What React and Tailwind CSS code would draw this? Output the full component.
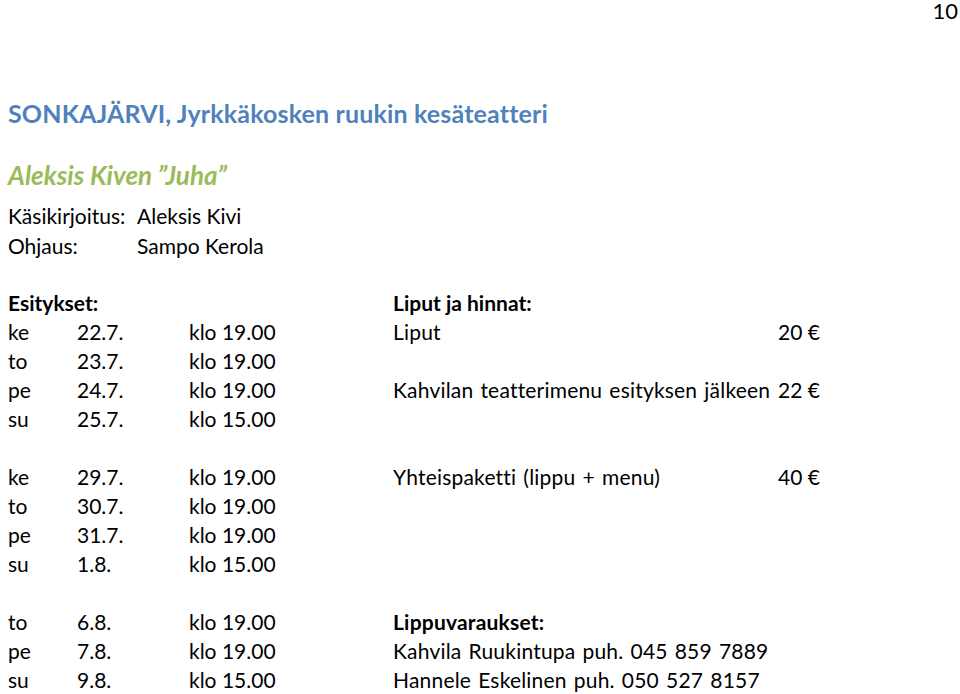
const shows = [
  [
    ["ke", "22.7.", "klo 19.00"],
    ["to", "23.7.", "klo 19.00"],
    ["pe", "24.7.", "klo 19.00"],
    ["su", "25.7.", "klo 15.00"],
  ],
  [
    ["ke", "29.7.", "klo 19.00"],
    ["to", "30.7.", "klo 19.00"],
    ["pe", "31.7.", "klo 19.00"],
    ["su", "1.8.", "klo 15.00"],
  ],
  [
    ["to", "6.8.", "klo 19.00"],
    ["pe", "7.8.", "klo 19.00"],
    ["su", "9.8.", "klo 15.00"],
  ],
];

// right column text, lined up with the show rows
const right = [
  [
    { label: "Liput", price: "20 €" },
    null,
    { label: "Kahvilan teatterimenu esityksen jälkeen", price: "22 €" },
    null,
  ],
  [{ label: "Yhteispaketti (lippu + menu)", price: "40 €" }, null, null, null],
  [
    { label: "Kahvila Ruukintupa puh. 045 859 7889" },
    { label: "Hannele Eskelinen puh. 050 527 8157" },
  ],
];

const Row = ({ show, info, bold }) => (
  <div className="flex h-[29px] items-center">
    <div className="w-[69px]">{show?.[0]}</div>
    <div className="w-[112px]">{show?.[1]}</div>
    <div className="w-[204px]">{show?.[2]}</div>
    {info && (
      <div className={`flex w-[427px] justify-between whitespace-nowrap ${bold ? "font-bold" : ""}`}>
        <span className="tracking-[0.2px] [word-spacing:1.5px]">{info.label}</span>
        {info.price && <span>{info.price}</span>}
      </div>
    )}
  </div>
);

export default function App() {
  return (
    <div className="relative h-[694px] w-[960px] overflow-hidden bg-white font-['Lato',sans-serif] text-[21px] text-black">
      <div className="h-[20px] pt-[1px] pr-[2px] text-right text-[22px] leading-[19px]">10</div>

      <div className="pl-[8px]">
        <h1 className="mt-[78px] h-[30px] text-[25px] leading-[30px] font-bold tracking-[0.15px] text-[#4f81bd]">
          SONKAJÄRVI, Jyrkkäkosken ruukin kesäteatteri
        </h1>
        <h2 className="mt-[32px] h-[30px] text-[26px] leading-[30px] font-bold italic text-[#9bbb59]">
          Aleksis Kiven ”Juha”
        </h2>

        <div className="mt-[11px]">
          <div className="flex h-[30px] items-center">
            <span className="w-[129px]">Käsikirjoitus:</span>
            <span>Aleksis Kivi</span>
          </div>
          <div className="flex h-[30px] items-center">
            <span className="w-[129px]">Ohjaus:</span>
            <span>Sampo Kerola</span>
          </div>
        </div>

        <div className="mt-[27px] flex h-[29px] items-center font-bold">
          <div className="w-[385px]">Esitykset:</div>
          <div>Liput ja hinnat:</div>
        </div>
        {shows[0].map((s, i) => (
          <Row key={"a" + i} show={s} info={right[0][i]} />
        ))}
        <div className="h-[29px]" />
        {shows[1].map((s, i) => (
          <Row key={"b" + i} show={s} info={right[1][i]} />
        ))}
        <div className="h-[29px]" />
        <Row show={shows[2][0]} info={{ label: "Lippuvaraukset:" }} bold />
        {shows[2].slice(1).map((s, i) => (
          <Row key={"c" + i} show={s} info={right[2][i]} />
        ))}
      </div>
    </div>
  );
}
